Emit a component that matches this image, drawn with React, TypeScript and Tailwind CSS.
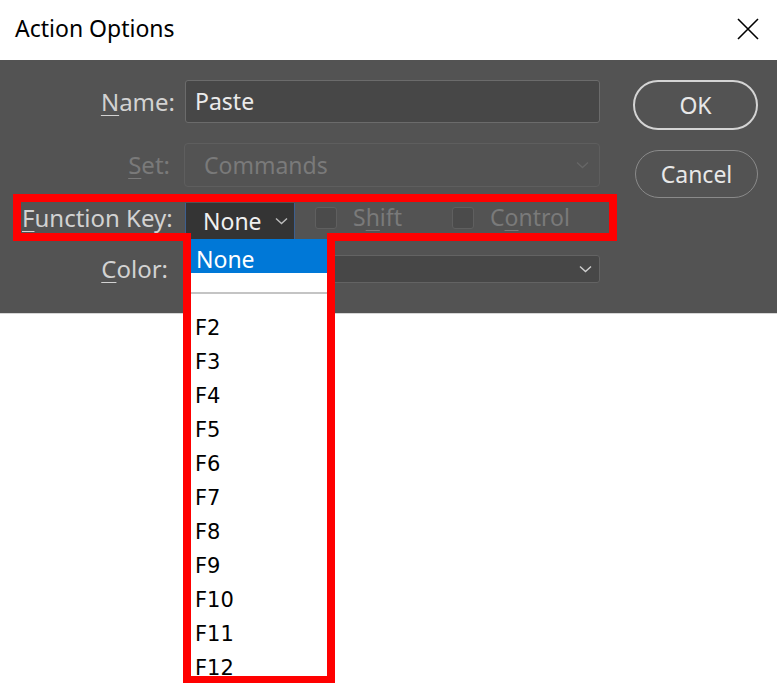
const keys = ["F2", "F3", "F4", "F5", "F6", "F7", "F8", "F9", "F10", "F11", "F12"];

function Chevron({ color }: { color: string }) {
  return (
    <svg width="13" height="8" viewBox="0 0 13 8" fill="none">
      <path d="M1 1.5 L6.5 6.5 L12 1.5" stroke={color} strokeWidth="1.4" />
    </svg>
  );
}

function Check({ label, mark, ml }: { label: string; mark: number; ml: string }) {
  return (
    <>
      <div
        className={`${ml} mb-[7px] h-[22px] w-[22px] shrink-0 rounded-[3px] border border-[#5f5f5f] bg-[#4b4b4b]`}
      />
      <span className="mb-[7px] ml-[16px] text-[#7a7a7a]">
        {label.slice(0, mark)}
        <span className="underline decoration-1 underline-offset-[4px]">{label[mark]}</span>
        {label.slice(mark + 1)}
      </span>
    </>
  );
}

export default function App() {
  return (
    <div className="relative h-[683px] w-[778px] overflow-hidden bg-white font-['Noto_Sans',sans-serif] text-[23px]">
      <div className="flex h-[60px] items-center justify-between pb-[3px] pl-[15px] pr-[19px]">
        <span className="text-black">Action Options</span>
        <svg width="22" height="22" viewBox="0 0 22 22">
          <path d="M1 1 L21 21 M21 1 L1 21" stroke="#000" strokeWidth="1.6" />
        </svg>
      </div>

      <div className="flex h-[254px] w-[777px] border-b border-[#d6d6d6] bg-[#535353]">
        <div className="flex w-[600px] flex-col pt-[20px]">
          <div className="flex h-[43px] items-center">
            <span className="w-[175px] text-right text-[24px] text-[#d2d2d2]">
              <span className="underline decoration-1 underline-offset-[4px]">N</span>ame:
            </span>
            <div className="ml-[10px] flex h-full w-[415px] items-center rounded-[3px] border border-[#6b6b6b] bg-[#474747] pl-[9px] text-[#ebebeb]">
              Paste
            </div>
          </div>

          <div className="mt-[20px] flex h-[44px] items-center">
            <span className="w-[170px] text-right text-[24px] text-[#7a7a7a]">
              <span className="underline decoration-1 underline-offset-[4px]">S</span>et:
            </span>
            <div className="ml-[14px] flex h-full w-[416px] items-center justify-between rounded-[4px] border border-[#5e5e5e] pl-[19px] pr-[10px] text-[#7a7a7a]">
              Commands
              <Chevron color="#666666" />
            </div>
          </div>

          <div className="mt-[16px] flex h-[36px] items-center">
            <span className="mb-[6px] w-[175px] pl-[22px] text-[24px] text-[#d2d2d2]">
              <span className="underline decoration-1 underline-offset-[4px]">F</span>unction Key:
            </span>
            <div className="relative ml-[10px] flex h-full w-[110px] items-center justify-between border-x border-[#3d5f8f] bg-[#343434] pl-[17px] pr-[6px] text-[#f0f0f0]">
              None
              <Chevron color="#bdbdbd" />
              <div className="absolute left-0 top-full z-10 w-[146px] bg-white">
                <div className="h-[34px] bg-[#0078d7] pl-[10px] pt-[3px] leading-[34px] text-white">None</div>
                <div className="h-[19px]" />
                <div className="h-[2px] bg-[#c4c4c4]" />
                <div className="h-[17px]" />
                {keys.map((k) => (
                  <div
                    key={k}
                    className="h-[34px] pl-[9px] font-['DejaVu_Sans',sans-serif] text-[21px] leading-[34px] text-black"
                  >
                    {k}
                  </div>
                ))}
              </div>
            </div>
            <Check label="Shift" mark={1} ml="ml-[20px]" />
            <Check label="Control" mark={1} ml="ml-[50px]" />
          </div>

          <div className="mt-[16px] flex h-[28px] items-center">
            <span className="w-[168px] text-right text-[24px] text-[#d2d2d2]">
              <span className="underline decoration-1 underline-offset-[4px]">C</span>olor:
            </span>
            <div className="ml-[17px] flex h-full w-[415px] items-center justify-end rounded-[3px] border border-[#636363] bg-[#474747] pr-[7px]">
              <Chevron color="#cfcfcf" />
            </div>
          </div>
        </div>

        <div className="ml-[33px] flex flex-col pt-[20px]">
          <div className="flex h-[50px] w-[125px] items-center justify-center rounded-full border-2 border-[#d4d4d4] text-[#e8e8e8]">
            OK
          </div>
          <div className="ml-[2px] mt-[20px] flex h-[48px] w-[123px] items-center justify-center rounded-full border-[1.5px] border-[#8a8a8a] text-[#e8e8e8]">
            Cancel
          </div>
        </div>
      </div>

      <svg
        className="pointer-events-none absolute left-0 top-0 z-20"
        width="778"
        height="683"
        viewBox="0 0 778 683"
        fill="none"
      >
        <path
          d="M17 198 H613 V237 H331 V680 H187 V237 H17 Z"
          stroke="#ff0000"
          strokeWidth="8"
        />
      </svg>
    </div>
  );
}
